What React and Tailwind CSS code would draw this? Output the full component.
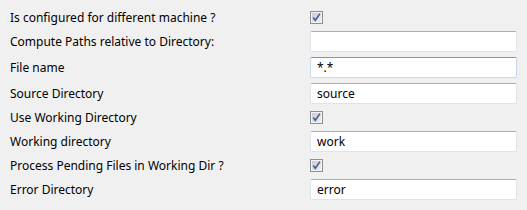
import React from 'react';

const rows = [
    { label: 'Is configured for different machine ?', type: 'check' },
    { label: 'Compute Paths relative to Directory:', type: 'text', value: '' },
    { label: 'File name', type: 'text', value: '*.*', focused: true },
    { label: 'Source Directory', type: 'text', value: 'source' },
    { label: 'Use Working Directory', type: 'check' },
    { label: 'Working directory', type: 'text', value: 'work' },
    { label: 'Process Pending Files in Working Dir ?', type: 'check' },
    { label: 'Error Directory', type: 'text', value: 'error' },
];

const CheckBox = () => (
    <svg width="13" height="13" viewBox="0 0 13 13" className="block">
        <defs>
            <linearGradient id="cbg" x1="0" y1="0" x2="1" y2="1">
                <stop offset="0" stopColor="#c9ccd3" />
                <stop offset="1" stopColor="#eef0f3" />
            </linearGradient>
        </defs>
        <rect x="0.5" y="0.5" width="12" height="12" fill="#f4f4f4" stroke="#8e8f8f" />
        <rect x="2" y="2" width="9" height="9" fill="url(#cbg)" />
        <path d="M3.2 6.6 L5.3 9.3 L9.9 2.6" fill="none" stroke="#4a5b9c" strokeWidth="1.6" />
    </svg>
);

const TextBox = ({ value, focused }) => (
    <div
        className={`h-[21px] w-[207px] rounded-[2px] border bg-white px-[6px] flex items-center text-[12px] text-black ${
            focused
                ? 'border-[#c5daed] border-t-[#5d9fd9]'
                : 'border-[#e2e3ea] border-t-[#abadb3]'
        }`}
    >
        {value}
    </div>
);

export default function App() {
    return (
        <div
            className="w-[527px] h-[210px] bg-[#f0f0f0] pt-[9px] pl-[10px] flex flex-col gap-[5px]"
            style={{ fontFamily: '"Noto Sans", "Open Sans", sans-serif' }}
        >
            {rows.map((r) => (
                <div
                    key={r.label}
                    className={`flex items-center ${r.type === 'check' ? 'h-[17px]' : 'h-[21px]'}`}
                >
                    <span className="w-[300px] text-[12px] text-black leading-none">{r.label}</span>
                    {r.type === 'check' ? <CheckBox /> : <TextBox value={r.value} focused={r.focused} />}
                </div>
            ))}
        </div>
    );
}
